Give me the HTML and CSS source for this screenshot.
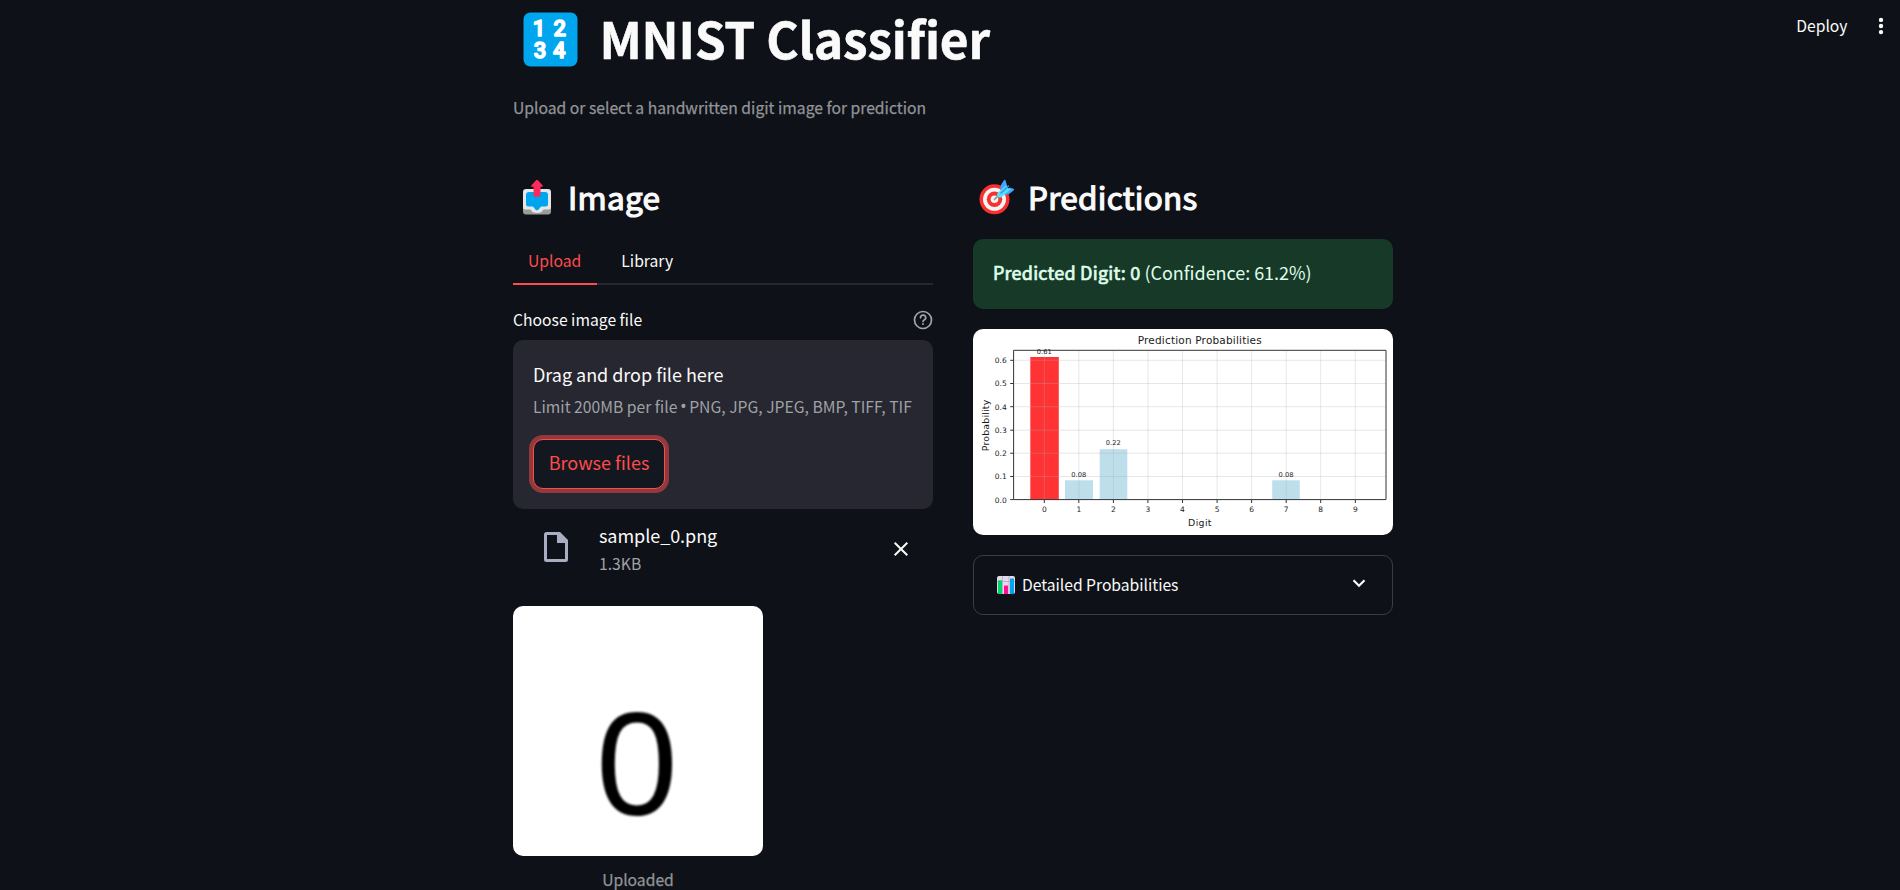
FILE: index.html
```html
<!DOCTYPE html>
<html lang="en">
<head>
<meta charset="utf-8">
<title>MNIST Classifier</title>
<link rel="stylesheet" href="styles.css">
</head>
<body>
<header class="toolbar">
  <span class="deploy">Deploy</span>
  <svg class="menu" width="6" height="18" viewBox="0 0 6 18"><circle cx="3" cy="2.9" r="2.2"/><circle cx="3" cy="9" r="2.2"/><circle cx="3" cy="15.1" r="2.2"/></svg>
</header>
<main class="page">
  <h1 class="title">
    <svg class="title-icon" width="55" height="55" viewBox="0 0 55 55">
      <rect x=".5" y=".5" width="54" height="54" rx="7" fill="#00a6ed"/>
      <g class="keycap"><text x="16" y="24">1</text><text x="36.700" y="24">2</text><text x="17" y="46.300">3</text><text x="36.300" y="46.300">4</text></g>
    </svg>
    <span class="title-text">MNIST Classifier</span>
  </h1>
  <p class="subtitle">Upload or select a handwritten digit image for prediction</p>
  <div class="columns">
    <section class="column">
      <h2 class="heading">
        <svg class="heading-icon" width="40" height="40" viewBox="0 0 40 40">
          <rect x="6" y="17" width="28" height="18.5" rx="3" fill="#9b9b9b"/>
          <path d="M9 10h22q3 0 3 3v15.500q0 2-2 2h-5.500q-1.500 2.500-3.500 3-3 .8-6 0-2-.5-3.500-3H8q-2 0-2-2V13q0-3 3-3z" fill="#e6e6e6"/>
          <path d="M12 13h16q3 0 3 3v9q0 2.500-2.500 2.500h-3.800q-.8 0-1.300.8l-2 2.500q-1.400 1-2.800 0l-2-2.500q-.5-.8-1.300-.8h-3.800Q9 27.500 9 25v-9q0-3 3-3z" fill="#00a6ed"/>
          <path d="M20 .8q.6 0 1.200.7l4.500 5q.8 1.300-.7 1.300h-1.500V16q0 1.700-1.700 1.700h-3.600q-1.700 0-1.700-1.700V7.800H15q-1.500 0-.7-1.300l4.500-5Q19.400.8 20 .8z" fill="#ff2a5c"/>
        </svg>
        <span class="heading-text">Image</span>
      </h2>
      <nav class="tabs"><span class="tab active">Upload</span><span class="tab">Library</span></nav>
      <div class="label-row">
        <span>Choose image file</span>
        <svg width="20" height="20" viewBox="0 0 20 20" fill="none" stroke="#a3a4a8" stroke-width="1.700" stroke-linecap="round" stroke-linejoin="round"><circle cx="10" cy="10" r="8.500"/><path d="M7.500 7.800a2.600 2.600 0 1 1 3.700 2.200Q10 10.600 10 11.400"/><path d="M10 14h.01" stroke-width="2"/></svg>
      </div>
      <div class="dropzone">
        <div class="drop-title">Drag and drop file here</div>
        <div class="drop-limit">Limit 200MB per file <span class="bullet">•</span> PNG, JPG, JPEG, BMP, TIFF, TIF</div>
        <button class="browse">Browse files</button>
      </div>
      <div class="file-row">
        <svg class="file-icon" width="24" height="30" viewBox="0 0 24 30"><path d="M2.500 0H16l8 8v19.500Q24 30 21.500 30h-19Q0 30 0 27.500v-25Q0 0 2.500 0zM3 3v24h18V11h-8V3z" fill="#a9adc1" fill-rule="evenodd"/></svg>
        <div class="file-info"><div class="file-name">sample_0.png</div><div class="file-size">1.3KB</div></div>
        <svg class="close" width="16" height="16" viewBox="0 0 16 16"><path d="M1.700 1.700l12.600 12.600M14.300 1.700L1.700 14.300" stroke="#fafafa" stroke-width="2"/></svg>
      </div>
      <figure class="preview">
        <svg class="sample" width="250" height="250" viewBox="0 0 250 250"><defs><filter id="soft"><feGaussianBlur stdDeviation="1"/></filter></defs><text x="124" y="209" filter="url(#soft)">0</text></svg>
        <figcaption>Uploaded</figcaption>
      </figure>
    </section>
    <section class="column">
      <h2 class="heading">
        <svg class="heading-icon" width="40" height="40" viewBox="0 0 40 40">
          <circle cx="17.500" cy="20.300" r="15" fill="#f8312f"/><circle cx="17.500" cy="20.300" r="11.500" fill="#f4f4f4"/><circle cx="17.500" cy="20.300" r="7.700" fill="#f8312f"/><circle cx="17.500" cy="20.300" r="3.800" fill="#f4f4f4"/>
          <path d="M17.500 20.300l5-5" stroke="#9b9b9b" stroke-width="1.800" stroke-linecap="round"/>
          <path d="M23.500 10.500q-.5-3 1-5.500l2.500-3.800q1-1 1.500.3l2 6.500L24 14zM26.500 14.500l6-6 4 1.200q1.200.6.300 1.500l-4 3.300q-1.500 1.500-6 1z" fill="#46a4fb"/>
          <path d="M20.500 14l8.500-7.500 2 2.500 2.500 1.500-8.500 7.300q-1.800 1.200-3.500.8-2.500-2.200-1-4.600z" fill="#50e2ff"/>
          <path d="M24 14l7.500-7" stroke="#3790e8" stroke-width="1.500" stroke-linecap="round"/>
        </svg>
        <span class="heading-text">Predictions</span>
      </h2>
      <div class="alert"><span><b>Predicted Digit: 0</b> (Confidence: 61.2%)</span></div>
      <svg class="chart" width="420" height="206" viewBox="973 329 420 206">
        <g class="bars"><rect class="top" x="1030.300" y="357" width="28.500" height="142.700"/><rect x="1065" y="480.300" width="28" height="19.400"/><rect x="1099.700" y="449.200" width="27.600" height="50.500"/><rect x="1272.200" y="480.300" width="27.600" height="19.400"/></g>
        <path class="grid" d="M1044.300 350.300V499.700M1078.800 350.300V499.700M1113.400 350.300V499.700M1147.900 350.300V499.700M1182.500 350.300V499.700M1217.100 350.300V499.700M1251.600 350.300V499.700M1286.200 350.300V499.700M1320.700 350.300V499.700M1355.300 350.300V499.700M1013.500 476.500H1386M1013.500 453.200H1386M1013.500 430.200H1386M1013.500 406.700H1386M1013.500 383.500H1386M1013.500 360.300H1386"/>
        <path class="axis" d="M1013.600 350.300H1386V499.600H1013.600zM1044.300 500v3M1078.800 500v3M1113.400 500v3M1147.900 500v3M1182.500 500v3M1217.100 500v3M1251.600 500v3M1286.200 500v3M1320.700 500v3M1355.300 500v3M1013.500 499.600h-3.300M1013.500 476.500h-3.300M1013.500 453.200h-3.300M1013.500 430.200h-3.300M1013.500 406.700h-3.300M1013.500 383.500h-3.300M1013.500 360.300h-3.300"/>
        <g class="ticks"><text x="1044.300" y="512.300">0</text><text x="1078.800" y="512.300">1</text><text x="1113.400" y="512.300">2</text><text x="1147.900" y="512.300">3</text><text x="1182.500" y="512.300">4</text><text x="1217.100" y="512.300">5</text><text x="1251.600" y="512.300">6</text><text x="1286.200" y="512.300">7</text><text x="1320.700" y="512.300">8</text><text x="1355.300" y="512.300">9</text></g>
        <g class="ticks left"><text x="1006.700" y="502.500">0.0</text><text x="1006.700" y="479.300">0.1</text><text x="1006.700" y="456">0.2</text><text x="1006.700" y="433">0.3</text><text x="1006.700" y="409.500">0.4</text><text x="1006.700" y="386.300">0.5</text><text x="1006.700" y="363.100">0.6</text></g>
        <g class="values"><text x="1044.300" y="353.700">0.61</text><text x="1078.800" y="476.700">0.08</text><text x="1113.300" y="445.400">0.22</text><text x="1286" y="476.700">0.08</text></g>
        <text class="chart-title" x="1199.700" y="344.300" textLength="124">Prediction Probabilities</text>
        <text class="axis-label" x="1199.800" y="525.600" textLength="23.500">Digit</text>
        <text class="axis-label" transform="translate(988.500 425.500) rotate(-90)" textLength="51.500">Probability</text>
      </svg>
      <div class="expander">
        <svg class="expander-icon" width="18" height="18" viewBox="0 0 18 18"><rect width="18" height="18" rx="2" fill="#e3d9ec"/><path d="M0 5.500h18M5.500 0v18M12 0v18" stroke="#b4a9c3" stroke-width=".8"/><rect x="1" y="4.300" width="4" height="13.700" rx=".6" fill="#00d26a"/><rect x="7" y="9.500" width="4" height="8.500" rx=".6" fill="#ff0f8f"/><rect x="13" y="2.500" width="4" height="15.500" rx=".6" fill="#00a6ed"/></svg>
        <span class="expander-text">Detailed Probabilities</span>
        <svg class="chevron" width="14" height="9" viewBox="0 0 14 9"><path d="M1.500 1.300L7 6.800l5.500-5.500" fill="none" stroke="#fafafa" stroke-width="2.200"/></svg>
      </div>
    </section>
  </div>
</main>
</body>
</html>
```
FILE: styles.css
```css
* { box-sizing: border-box; }
body {
  margin: 0;
  height: 890px;
  overflow: hidden;
  background: #0e1117;
  color: #fafafa;
  font: 15.7px/28px "Noto Sans CJK SC", "Open Sans", sans-serif;
}
svg { display: block; flex: none; }
.toolbar {
  position: absolute;
  top: 0;
  right: 0;
  display: flex;
  align-items: center;
  gap: 30px;
  height: 51px;
  padding-right: 16.500px;
}
.deploy { padding-top: 1px; }
.menu { fill: #fafafa; }
.page { width: 880px; margin-left: 513px; padding-top: 5px; }
.title { display: flex; align-items: center; gap: 21.500px; height: 66px; margin: 0; padding-left: 10px; font-size: 49.500px; font-weight: 700; line-height: 66px; letter-spacing: -.15px; }
.title-text { -webkit-text-stroke: .6px; }
.title-icon { margin-top: 3px; }
.keycap { font: 500 22px Roboto, sans-serif; fill: #fff; stroke: #fff; stroke-width: 1.500; stroke-linejoin: round; text-anchor: middle; }
.subtitle { margin: 23px 0 53px; color: #929498; -webkit-text-stroke: .25px; }
.columns { display: grid; grid-template-columns: 420px 420px; gap: 40px; }
.heading { display: flex; align-items: center; gap: 11px; height: 42px; margin: 0; padding-left: 4px; font-size: 31.500px; font-weight: 400; -webkit-text-stroke: 1.2px; line-height: 42px; letter-spacing: .25px; }
.heading-icon { margin-top: 6px; }
.tabs { display: flex; gap: 9.500px; height: 50px; margin-top: 18px; line-height: 52px; box-shadow: inset 0 -2px #262730; }
.tab { height: 50px; padding: 0 15.500px 0 15px; }
.tab.active { color: #ff4b4b; box-shadow: inset 0 -2px #ff4b4b; }
.label-row { display: flex; justify-content: space-between; align-items: center; margin-top: 21px; }
.dropzone { height: 169px; margin-top: 6px; padding: 19px 20px 20px; border-radius: 10px; background: #262730; }
.drop-title { font-size: 18px; line-height: 30px; letter-spacing: -.03px; }
.drop-limit { margin-top: 4px; color: #a0a1a6; white-space: nowrap; }
.bullet { font-family: "Open Sans", sans-serif; font-size: 18px; line-height: 1; margin: 0 -1px; }
.browse { display: block; height: 50px; width: 132px; margin-top: 18px; padding: 0 0 4px; border: 1px solid #ff4b4b; border-radius: 10px; background: #131720; box-shadow: 0 0 0 4px rgba(255, 75, 75, .5); color: #ff4b4b; font: 18px/44px "Noto Sans CJK SC", sans-serif; white-space: nowrap; }
.file-row { display: flex; align-items: center; height: 56px; margin-top: 12px; padding: 0 24.500px 0 31px; }
.file-icon { margin-top: -4px; }
.file-info { flex: 1; margin-left: 31px; }
.file-name { font-size: 18px; letter-spacing: -.05px; }
.file-size { padding-top: 1px; margin-bottom: -1px; color: #a0a1a6; }
.preview { width: 250px; margin: 29px 0 0; text-align: center; color: #929498; }
.sample { border-radius: 10px; background: #fff; font: 147px "Liberation Sans", sans-serif; text-anchor: middle; }
.preview figcaption { margin-top: 10px; -webkit-text-stroke: .25px; }
.alert { display: flex; align-items: center; height: 70px; margin-top: 22px; padding: 0 20px 4px; border-radius: 10px; background: #173928; color: #dffde9; font-size: 18px; }
.alert span { letter-spacing: -.03px; }
.alert b { font-weight: 400; -webkit-text-stroke: .7px; letter-spacing: .22px; }
.chart { margin-top: 20px; border-radius: 10px; background: #fff; font-family: "DejaVu Sans", sans-serif; }
.chart text { text-anchor: middle; fill: #1a1a1a; }
.bars { fill: #bddfeb; }
.bars .top { fill: #ff3333; }
.grid { stroke: #b0b0b0; stroke-opacity: .3; stroke-width: 1; }
.axis { fill: none; stroke: #333; stroke-width: 1; }
.ticks { font-size: 7.500px; }
.chart .left text { text-anchor: end; }
.values { font-size: 6.700px; }
.chart-title { font-size: 10.500px; }
.axis-label { font-size: 9.400px; }
.expander { display: flex; align-items: center; height: 60px; margin-top: 20px; padding: 0 26px 0 23px; border: 1px solid #3b3d42; border-radius: 10px; }
.expander-text { flex: 1; margin-left: 7px; letter-spacing: -.03px; }
.chevron { margin-top: -3px; }
```
